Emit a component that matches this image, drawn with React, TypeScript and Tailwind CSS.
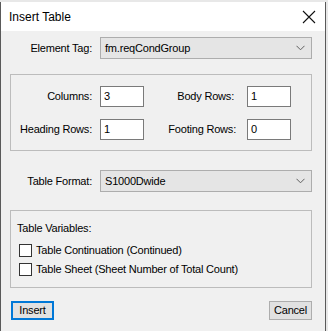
import React from "react";

const font = { fontFamily: '"Liberation Sans", Arial, sans-serif' };

function Select({ value }: { value: string }) {
  return (
    <div className="flex h-[22px] w-[212px] items-center justify-between border border-[#adadad] bg-[#e5e5e5] pl-[4px] pr-[6px]">
      <span className="text-[11px] text-black">{value}</span>
      <svg width="9" height="6" viewBox="0 0 9 6">
        <path d="M0.5 0.8 L4.5 4.8 L8.5 0.8" fill="none" stroke="#606060" strokeWidth="1" />
      </svg>
    </div>
  );
}

function Input({ value }: { value: string }) {
  return (
    <div className="flex h-[21px] w-[44px] items-center border border-[#7a7a7a] bg-white pl-[3px] text-[11px] text-black">
      {value}
    </div>
  );
}

function Check({ label }: { label: string }) {
  return (
    <div className="flex h-[13px] items-center gap-[4px]">
      <div className="h-[13px] w-[13px] border border-[#333333] bg-white" />
      <span className="text-[11px] text-black">{label}</span>
    </div>
  );
}

export default function App() {
  return (
    <div className="flex h-[331px] w-[328px] bg-[#e8e8e8] pt-[2px]" style={font}>
      <div className="flex w-[326px] flex-col border-l border-r border-[#5a5a5a] bg-[#f0f0f0]">
        {/* Title bar */}
        <div className="flex h-[29px] items-center justify-between bg-white pl-[8px] pr-[9px]">
          <span className="text-[12px] text-black">Insert Table</span>
          <svg width="14" height="14" viewBox="0 0 14 14">
            <path d="M1 1 L13 13 M13 1 L1 13" stroke="#111" strokeWidth="1.1" fill="none" />
          </svg>
        </div>

        <div className="flex flex-col pl-[9px] tracking-[-0.2px]">
          {/* Element Tag */}
          <div className="mt-[6px] flex items-center">
            <div className="w-[82px] text-right text-[11px] text-black">Element Tag:</div>
            <div className="ml-[8px]">
              <Select value="fm.reqCondGroup" />
            </div>
          </div>

          {/* Group box 1 */}
          <div className="mt-[15px] flex h-[77px] w-[302px] flex-col justify-center gap-[12px] border border-[#bcbcbc]">
            <div className="flex items-center">
              <div className="w-[81px] text-right text-[11px] text-black">Columns:</div>
              <div className="ml-[8px]">
                <Input value="3" />
              </div>
              <div className="w-[90px] text-right text-[11px] text-black">Body Rows:</div>
              <div className="ml-[13px]">
                <Input value="1" />
              </div>
            </div>
            <div className="flex items-center">
              <div className="w-[81px] text-right text-[11px] text-black">Heading Rows:</div>
              <div className="ml-[8px]">
                <Input value="1" />
              </div>
              <div className="w-[92px] text-right text-[11px] text-black">Footing Rows:</div>
              <div className="ml-[11px]">
                <Input value="0" />
              </div>
            </div>
          </div>

          {/* Table Format */}
          <div className="mt-[19px] flex items-center">
            <div className="w-[82px] text-right text-[11px] text-black">Table Format:</div>
            <div className="ml-[8px]">
              <Select value="S1000Dwide" />
            </div>
          </div>

          {/* Group box 2 */}
          <div className="mt-[18px] flex h-[78px] w-[302px] flex-col border border-[#bcbcbc] pl-[6px] pt-[9px]">
            <span className="text-[11px] text-black">Table Variables:</span>
            <div className="ml-[2px] mt-[7px] flex flex-col gap-[6px]">
              <Check label="Table Continuation (Continued)" />
              <Check label="Table Sheet (Sheet Number of Total Count)" />
            </div>
          </div>

          {/* Buttons */}
          <div className="mt-[13px] flex w-[302px] items-center justify-between">
            <div className="ml-[1px] flex h-[19px] w-[43px] items-center justify-center border-2 border-[#0078d7] bg-[#e1e1e1] text-[11px] text-black">
              Insert
            </div>
            <div className="flex h-[19px] w-[43px] items-center justify-center border border-[#adadad] bg-[#e1e1e1] text-[11px] text-black">
              Cancel
            </div>
          </div>
        </div>
      </div>
    </div>
  );
}
